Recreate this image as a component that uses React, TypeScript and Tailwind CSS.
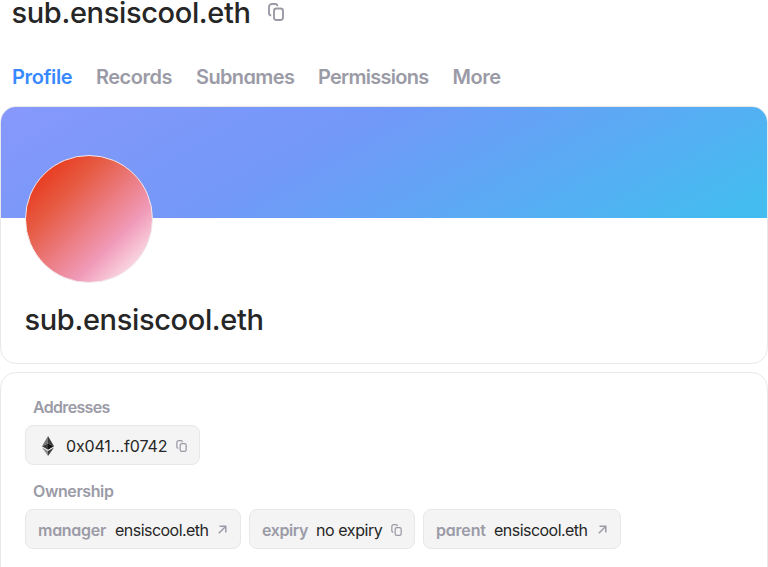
import type { ReactNode } from 'react';

function CopyIcon({ className }: { className: string }) {
  return (
    <svg viewBox="0 0 16 18" fill="none" stroke="#9b9ba7" strokeWidth="1.900" className={`shrink-0 ${className}`}>
      <path d="M3.200 12.300H3a2 2 0 0 1-2-2V4a3 3 0 0 1 3-3h3.300a2 2 0 0 1 2 2v0.300" />
      <rect x="6" y="5.500" width="9" height="11.500" rx="2.500" />
    </svg>
  );
}

function ArrowIcon() {
  return (
    <svg viewBox="0 0 9 9" fill="none" stroke="#9b9ba7" strokeWidth="1.500" className="mt-px h-[9px] w-[9px] shrink-0">
      <path d="M1.500 1.200H7.800V7.500M7.800 1.200L0.800 8.200" />
    </svg>
  );
}

function EthIcon() {
  return (
    <svg viewBox="0 0 12 20" className="mt-0.5 h-5 w-3 shrink-0">
      <path d="M6 0L0 10.200L6 7.400Z" fill="#777777" />
      <path d="M6 0L12 10.200L6 7.400Z" fill="#3c3c3b" />
      <path d="M0 10.200L6 7.400V13.700Z" fill="#393939" />
      <path d="M12 10.200L6 7.400V13.700Z" fill="#141414" />
      <path d="M0 11.500L6 15V20Z" fill="#8c8c8c" />
      <path d="M12 11.500L6 15V20Z" fill="#3c3c3b" />
    </svg>
  );
}

function Pill({ className, children }: { className: string; children: ReactNode }) {
  return (
    <div className={`flex h-10 items-center rounded-lg border border-[#e8e8e8] bg-[#f4f4f4] pl-3 text-base whitespace-nowrap ${className}`}>
      {children}
    </div>
  );
}

const tabs = [
  { label: 'Profile', style: 'w-[84px] tracking-[-0.35px] text-[#3889ff]' },
  { label: 'Records', style: 'w-[100px] tracking-[-0.5px] text-[#9b9ba7]' },
  { label: 'Subnames', style: 'w-[122px] tracking-[-0.62px] text-[#9b9ba7]' },
  { label: 'Permissions', style: 'w-[134.5px] tracking-[-0.73px] text-[#9b9ba7]' },
  { label: 'More', style: 'w-[60px] tracking-[-0.5px] text-[#9b9ba7]' },
];

export default function App() {
  return (
    <div className="h-[567px] w-[768px] overflow-hidden bg-white font-['Inter','Liberation_Sans',sans-serif] text-[#262626] [font-feature-settings:'cv11']">
      <header className="flex h-[26px] items-center pl-[11.5px]">
        <h1 className="w-[256.5px] shrink-0 text-[29px] leading-[26px] font-medium tracking-[-0.35px] whitespace-nowrap">sub.ensiscool.eth</h1>
        <CopyIcon className="mt-[-2px] h-[18px] w-[16px]" />
      </header>
      <nav className="mt-[38px] flex h-[26px] items-center pl-3 text-xl font-semibold">
        {tabs.map((t) => (
          <span key={t.label} className={`shrink-0 whitespace-nowrap ${t.style}`}>{t.label}</span>
        ))}
      </nav>
      <section className="mt-4 h-[258px] overflow-hidden rounded-2xl border border-[#e8e8e8]">
        <div className="h-[111px] bg-[linear-gradient(330.4deg,#44bcf0_4.54%,#7298f8_59.2%,#a099ff_148.85%)]" />
        <div className="relative mt-[-63px] ml-6 h-32 w-32 rounded-full border border-[#f0e8ea] bg-[linear-gradient(135deg,#e84125_16%,#e65a42_31%,#f09ab8_69%,#ffffff_98%)]" />
        <h2 className="mt-[19px] ml-[23.5px] text-[29px] leading-9 font-medium tracking-[-0.35px] whitespace-nowrap">sub.ensiscool.eth</h2>
      </section>
      <section className="mt-2 h-[220px] rounded-2xl border border-[#e8e8e8] pt-6 pl-6">
        <h3 className="ml-2 h-5 text-base leading-5 font-semibold tracking-[-0.68px] text-[#9b9ba7]">Addresses</h3>
        <Pill className="mt-2 w-[175px]">
          <div className="flex w-[28px] pl-1"><EthIcon /></div>
          <span className="w-[109.5px] pt-0.5 tracking-[-0.15px]">0x041...f0742</span>
          <CopyIcon className="mt-px h-[12px] w-[11px]" />
        </Pill>
        <h3 className="mt-4 ml-2 h-5 text-base leading-5 font-semibold tracking-[-0.4px] text-[#9b9ba7]">Ownership</h3>
        <div className="mt-2 flex gap-2">
          <Pill className="w-[216px]">
            <span className="w-[77px] pt-0.5 font-semibold tracking-[-0.28px] text-[#9b9ba7]">manager</span>
            <span className="w-[102.5px] pt-0.5 tracking-[-0.53px]">ensiscool.eth</span>
            <ArrowIcon />
          </Pill>
          <Pill className="w-[166px]">
            <span className="w-[54px] pt-0.5 font-semibold tracking-[-0.4px] text-[#9b9ba7]">expiry</span>
            <span className="w-[74.5px] pt-0.5 tracking-[-0.42px]">no expiry</span>
            <CopyIcon className="mt-px h-[12px] w-[11px]" />
          </Pill>
          <Pill className="w-[198px]">
            <span className="w-[58px] pt-0.5 font-semibold tracking-[-0.2px] text-[#9b9ba7]">parent</span>
            <span className="w-[103.5px] pt-0.5 tracking-[-0.53px]">ensiscool.eth</span>
            <ArrowIcon />
          </Pill>
        </div>
      </section>
    </div>
  );
}
